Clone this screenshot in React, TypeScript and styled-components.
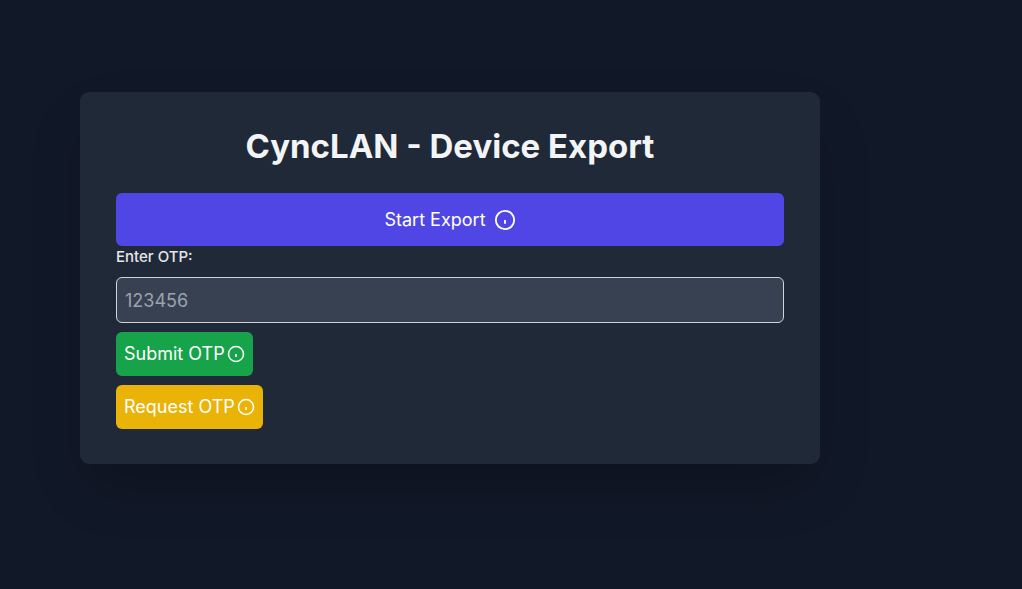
import React from "react";
import styled, { createGlobalStyle } from "styled-components";

const GlobalStyle = createGlobalStyle`
  *, *::before, *::after { box-sizing: border-box; }
  body {
    margin: 0;
    background: #111827;
    color: #f3f4f6;
    font-family: Inter, "Liberation Sans", sans-serif;
    font-size: 18px;
    line-height: 26px;
  }
  button, input { font: inherit; }
`;

const Page = styled.main`
  min-height: 100vh;
  padding: 92px 80px;
`;

const Card = styled.section`
  max-width: 740px;
  padding: 35px 36px;
  border-radius: 9px;
  background: #1f2937;
  box-shadow: 0 27px 54px -13px rgba(0, 0, 0, 0.25);
`;

const Title = styled.h1`
  margin: 0 0 28px;
  font-size: 33px;
  font-weight: 700;
  line-height: 38px;
  text-align: center;
`;

const Button = styled.button<{ $color: string; $wide?: boolean }>`
  display: flex;
  align-items: center;
  justify-content: center;
  gap: ${(p) => (p.$wide ? "8px" : "2px")};
  width: ${(p) => (p.$wide ? "100%" : "auto")};
  padding: ${(p) => (p.$wide ? "13px 18px" : "9px 8px")};
  border: 0;
  border-radius: 6px;
  background: ${(p) => p.$color};
  color: #ffffff;
  line-height: ${(p) => (p.$wide ? "27px" : "26px")};
  cursor: pointer;
`;

const Form = styled.form`
  display: flex;
  flex-direction: column;
  align-items: flex-start;
  gap: 9px;
`;

const Label = styled.label`
  font-size: 15px;
  font-weight: 500;
  line-height: 22px;
  color: #e5e7eb;
`;

const Input = styled.input`
  width: 100%;
  height: 46px;
  padding: 8px;
  border: 1px solid #d1d5db;
  border-radius: 6px;
  background: #374151;
  color: #f3f4f6;
  &::placeholder { color: #9ca3af; opacity: 1; }
`;

const Icon = styled.svg`
  flex: none;
  fill: none;
  stroke: currentColor;
`;

function InfoIcon({ size }: { size: number }) {
  return (
    <Icon width={size} height={size} viewBox="0 0 24 24" strokeWidth={2} aria-hidden="true">
      <circle cx="12" cy="12" r="10" />
      <path d="M12 12v4" />
    </Icon>
  );
}

export default function App() {
  return (
    <>
      <GlobalStyle />
      <Page>
        <Card>
          <Title>CyncLAN - Device Export</Title>
          <Button type="button" $color="#4f46e5" $wide>
            Start Export
            <InfoIcon size={22} />
          </Button>
          <Form onSubmit={(e) => e.preventDefault()}>
            <Label htmlFor="otp">Enter OTP:</Label>
            <Input id="otp" type="text" placeholder="123456" />
            <Button type="submit" $color="#16a34a">
              Submit OTP
              <InfoIcon size={18} />
            </Button>
            <Button type="button" $color="#eab308">
              Request OTP
              <InfoIcon size={18} />
            </Button>
          </Form>
        </Card>
      </Page>
    </>
  );
}
